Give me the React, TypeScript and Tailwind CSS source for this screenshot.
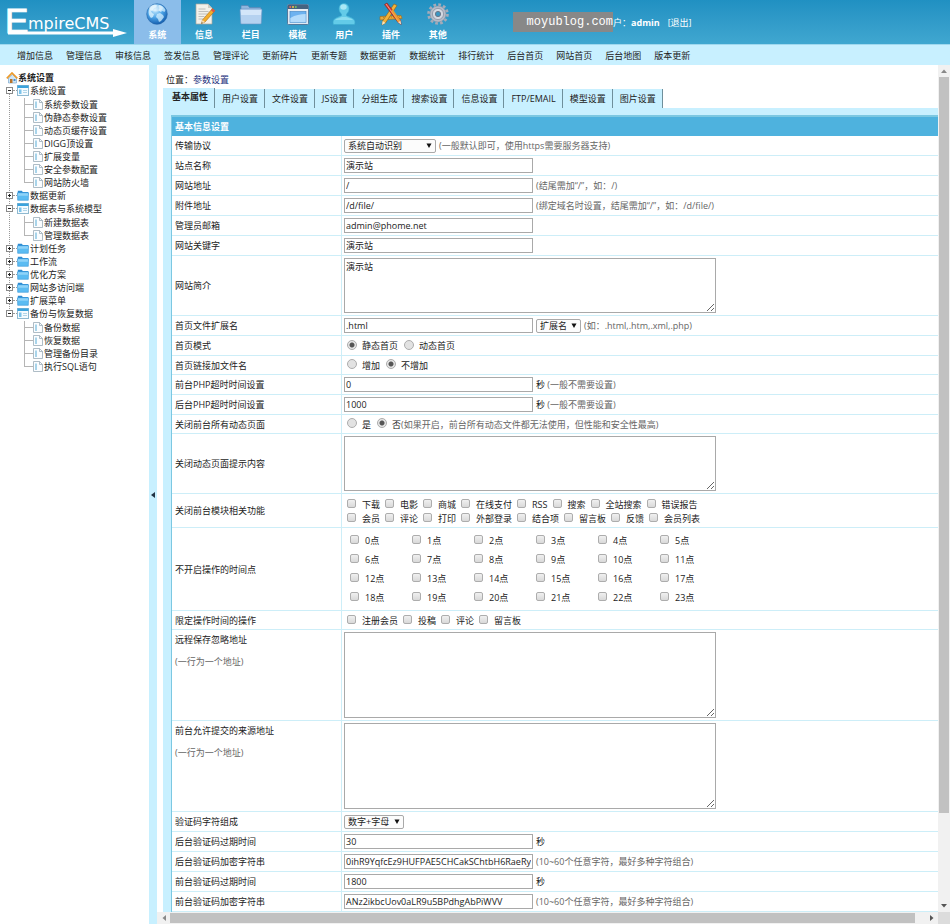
import React, { useState } from 'react';

type TreeGroup = { name: string; children?: string[] };

const menuLinks = ['增加信息', '管理信息', '审核信息', '签发信息', '管理评论', '更新碎片', '更新专题', '数据更新', '数据统计', '排行统计', '后台首页', '网站首页', '后台地图', '版本更新'];

const tabs = ['基本属性', '用户设置', '文件设置', 'JS设置', '分组生成', '搜索设置', '信息设置', 'FTP/EMAIL', '模型设置', '图片设置'];

const tree: TreeGroup[] = [
    { name: '系统设置', children: ['系统参数设置', '伪静态参数设置', '动态页缓存设置', 'DIGG顶设置', '扩展变量', '安全参数配置', '网站防火墙'] },
    { name: '数据更新' },
    { name: '数据表与系统模型', children: ['新建数据表', '管理数据表'] },
    { name: '计划任务' },
    { name: '工作流' },
    { name: '优化方案' },
    { name: '网站多访问端' },
    { name: '扩展菜单' },
    { name: '备份与恢复数据', children: ['备份数据', '恢复数据', '管理备份目录', '执行SQL语句'] },
];

const modules = [
    ['下载', '电影', '商城', '在线支付', 'RSS', '搜索', '全站搜索', '错误报告'],
    ['会员', '评论', '打印', '外部登录', '结合项', '留言板', '反馈', '会员列表'],
];

const hours = Array.from({ length: 24 }, (_, i) => `${i}点`);

/* ---------- icons ---------- */

const GlobeIcon = () => (
    <svg viewBox="0 0 24 24" className="size-6">
        <defs>
            <radialGradient id="globe" cx="0.4" cy="0.3" r="0.75">
                <stop offset="0" stopColor="#c9ecff" />
                <stop offset="0.5" stopColor="#4ba3e6" />
                <stop offset="1" stopColor="#0f56a8" />
            </radialGradient>
        </defs>
        <circle cx="12" cy="12" r="10.3" fill="url(#globe)" stroke="#2465a8" strokeWidth="0.6" />
        <path d="M4 8c1-3 3-5 6-5.500l2 1-1 2-2 .5-1 2-2 1 1 2 2 1-1 3-2 1c-2-2-3-5-2-8z" fill="#e2f5ff" opacity=".75" />
        <path d="M14 3c3 .5 5 2 6.500 5l-1 2-2-1-2 1-2-2 1-2-1-1zM12 12l3-1 3 2 1 2-3 4-2 1-1-3-2-2z" fill="#d3efff" opacity=".75" />
        <ellipse cx="11" cy="6" rx="7" ry="3.500" fill="#fff" opacity=".4" />
    </svg>
);

const NoteIcon = () => (
    <svg viewBox="0 0 24 24" className="size-6">
        <path d="M4 2h12l4 4v16H4z" fill="#f3f1ea" stroke="#a9a69c" strokeWidth="0.7" />
        <path d="M16 2v4h4z" fill="#cfccc2" />
        <path d="M6.500 7h7M6.500 9.500h10M6.500 12h9M6.500 14.500h6M6.500 17h5" stroke="#b9b9b6" strokeWidth="0.9" />
        <path d="M20.500 6.500l2.500 2.200L13 20l-3.500 1.500 1-3.600z" fill="#f4ae2b" stroke="#a76a12" strokeWidth="0.6" />
        <path d="M20.500 6.500l2.500 2.200-1.500 1.700-2.500-2.200z" fill="#d9534a" />
        <path d="M10.500 17.900l2.500 2.100-3.500 1.500z" fill="#f7dfb3" />
        <path d="M10 20.200l.8.700-1.500.7z" fill="#333" />
    </svg>
);

const FolderIcon = () => (
    <svg viewBox="0 0 24 24" className="size-6">
        <path d="M2 4.500c0-.6.400-1 1-1h6l1.500 2H21c.6 0 1 .4 1 1V10H2z" fill="#8fb6dd" stroke="#5580b0" strokeWidth="0.6" />
        <path d="M1 8c0-.6.400-1 1-1h20c.6 0 1 .4 1 1l-.7 13c0 .6-.4 1-1 1H2.700c-.6 0-1-.4-1-1z" fill="#b5d2f0" stroke="#6b93c2" strokeWidth="0.6" />
        <path d="M1.800 8h20.400l-.3 5H2.100z" fill="#d3e6f9" />
    </svg>
);

const WindowIcon = () => (
    <svg viewBox="0 0 24 24" className="size-6">
        <rect x="1.500" y="2.500" width="21" height="20" rx="1" fill="#dfe9f2" stroke="#54799c" />
        <rect x="2" y="3" width="20" height="4" fill="#46637f" />
        <circle cx="4.200" cy="5" r="1" fill="#ec6a5b" />
        <circle cx="7" cy="5" r="1" fill="#f3c447" />
        <circle cx="9.800" cy="5" r="1" fill="#79c65b" />
        <rect x="2" y="7" width="20" height="2" fill="#e9eef3" />
        <rect x="4" y="9.500" width="16" height="11" fill="#6db2f0" stroke="#3e82c4" strokeWidth="0.6" />
        <path d="M4.300 16c5-3 10-4 15.400-4v8.200H4.300z" fill="#b3dbfb" />
    </svg>
);

const UserIcon = () => (
    <svg viewBox="0 0 24 24" className="size-6">
        <path d="M12 1.500c3 0 5 2.200 5 5.200 0 2.300-1.100 4.300-2.500 5.300v1.600c1 1.200 7.500 2 8.300 5.400.3 1.500.2 2.600-.3 3.500H1.500c-.5-.9-.6-2-.3-3.500.8-3.400 7.300-4.200 8.300-5.400V12C8.100 11 7 9 7 6.700c0-3 2-5.200 5-5.200z" fill="#63cbe8" stroke="#3aabd0" strokeWidth="0.6" />
        <ellipse cx="11.500" cy="5" rx="3.200" ry="2.700" fill="#a9e8f6" />
        <path d="M3 18c2-2 5-2 7-3h4c2 1 5 1 7 3z" fill="#8bddf0" />
    </svg>
);

const PluginIcon = () => (
    <svg viewBox="0 0 24 24" className="size-6">
        <path d="M1 14.500l21 -1 1 3-22 1.500z" fill="#e9a93a" stroke="#a26a14" strokeWidth="0.6" />
        <path d="M4 15.500l17-.8" stroke="#8a5a12" strokeWidth="0.5" strokeDasharray="1 1" />
        <path d="M15 2l3 1.500L6.500 21 3 23l.6-4z" fill="#f2b33a" stroke="#8f5c11" strokeWidth="0.6" />
        <path d="M3.600 19l2.900 2L3 23z" fill="#f5e3c0" />
        <path d="M5.500 2.500L8 1l13.500 17.500.7 4-3.100-2z" fill="#d8372f" stroke="#8b1913" strokeWidth="0.5" />
        <path d="M7 2l12.800 17.800" stroke="#f9b49b" strokeWidth="0.8" />
        <path d="M12 9l2-1.500 7.500 11-2.400 2z" fill="#f2b33a" opacity=".8" />
        <path d="M21.500 18.500l.7 4-3.100-2z" fill="#f2dfc2" />
    </svg>
);

const GearIcon = () => (
    <svg viewBox="0 0 24 24" className="size-6">
        <circle cx="12" cy="12" r="9.300" fill="none" stroke="#a4abb9" strokeWidth="3" strokeDasharray="2.670 2.200" />
        <circle cx="12" cy="12" r="8" fill="#b4bbc8" stroke="#8a91a0" strokeWidth="0.5" />
        <circle cx="12" cy="12" r="5.600" fill="#d3d8e1" stroke="#8b92a2" strokeWidth="0.8" />
        <circle cx="12" cy="12" r="2.600" fill="#3a97c4" stroke="#6d7688" />
    </svg>
);

const HomeIcon = () => (
    <svg viewBox="0 0 12 12" className="size-3 shrink-0">
        <path d="M2.500 6v5h8V6L6.500 2.500z" fill="#cfe6f7" stroke="#6d9dc7" strokeWidth="0.6" />
        <path d="M0.800 6.300L6 1l5.300 5.300" fill="none" stroke="#ec9a2c" strokeWidth="1.700" />
        <rect x="4" y="7" width="2.500" height="4" fill="#b97328" />
        <rect x="7.500" y="7" width="2" height="2" fill="#4b8ed0" />
    </svg>
);

const OpenGroupIcon = () => (
    <svg viewBox="0 0 12 11" className="h-[11px] w-3 shrink-0">
        <rect x="0.500" y="0.500" width="11" height="10" fill="#f4fbff" stroke="#8fb9d0" />
        <rect x="0.500" y="0.500" width="11" height="2.500" fill="#3ba3dd" />
        <rect x="2" y="4.500" width="2.500" height="4.500" fill="#7cc3ea" />
        <path d="M6 5.500h4M6 7.500h4" stroke="#9fcbe2" strokeWidth="0.8" />
    </svg>
);

const ClosedGroupIcon = () => (
    <svg viewBox="0 0 12 11" className="h-[11px] w-3 shrink-0">
        <path d="M0.800 0.800h4l1 1.200h5.400V5H0.800z" fill="#2f8bd0" />
        <path d="M0.500 2.800h11l-.2 7.500H0.700z" fill="#5cbcf2" stroke="#3596d6" strokeWidth="0.6" />
        <path d="M1 3.300h10l-.1 2.500H1.100z" fill="#8fd3f8" />
    </svg>
);

const PageIcon = () => (
    <svg viewBox="0 0 10 11" className="h-[11px] w-[10px] shrink-0">
        <path d="M0.500 0.500h6l3 3v7h-9z" fill="#fbfdff" stroke="#9aacb8" strokeWidth="0.8" />
        <path d="M6.500 0.500v3h3" fill="none" stroke="#9aacb8" strokeWidth="0.8" />
        <rect x="2" y="2.500" width="2" height="6.500" fill="#a8d4ea" />
    </svg>
);

const ToggleBox = ({ open }: { open: boolean }) => (
    <svg viewBox="0 0 7 7" className="size-[7px] shrink-0" shapeRendering="crispEdges">
        <rect x="0.500" y="0.500" width="6" height="6" fill="#fff" stroke="#8a8a8a" />
        <path d={open ? 'M2 3.500h3' : 'M2 3.500h3M3.500 2v3'} stroke="#222" />
    </svg>
);

const Arrow = ({ d, color = '#555' }: { d: string; color?: string }) => (
    <svg viewBox="0 0 6 6" className="size-[6px] shrink-0">
        <path d={d} fill={color} />
    </svg>
);

const mainNav = [
    { name: '系统', icon: <GlobeIcon /> },
    { name: '信息', icon: <NoteIcon /> },
    { name: '栏目', icon: <FolderIcon /> },
    { name: '模板', icon: <WindowIcon /> },
    { name: '用户', icon: <UserIcon /> },
    { name: '插件', icon: <PluginIcon /> },
    { name: '其他', icon: <GearIcon /> },
];

/* ---------- form pieces ---------- */

const Row = ({ label, id, note, height = 'h-[20px]', children }: { label: string; id?: string; note?: string; height?: string; children: React.ReactNode }) => (
    <tr>
        <th scope="row" className={`${height} border-r border-b border-[#cdeef8] pl-[3px] text-left font-normal ${note ? 'pt-[3px] align-top' : 'align-middle'}`}>
            {id ? <label htmlFor={id} className="block">{label}</label> : <span className="block">{label}</span>}
            {note && <span className="mt-[9px] block text-[#666]">{note}</span>}
        </th>
        <td className="border-b border-[#cdeef8] pl-[2px] align-middle">
            <div className="flex items-center gap-[3px]">{children}</div>
        </td>
    </tr>
);

const TextBox = ({ id, value }: { id: string; value: string }) => (
    <input id={id} type="text" defaultValue={value} className="h-[15px] w-[189px] border border-[#a9a9a9] bg-white px-px outline-none" />
);

const Area = ({ id, value = '', height }: { id: string; value?: string; height: string }) => (
    <textarea id={id} defaultValue={value} className={`${height} block w-[372px] resize border border-[#a9a9a9] bg-white p-px outline-none`} />
);

const Picker = ({ id, options, width }: { id: string; options: string[]; width: string }) => (
    <span className="relative flex">
        <select id={id} aria-label={id} className={`${width} h-[14px] appearance-none rounded-xs border border-[#a9a9a9] bg-[#fcfcfc] pl-[3px] leading-[12px] outline-none`}>
            {options.map((o) => <option key={o}>{o}</option>)}
        </select>
        <span className="pointer-events-none absolute top-1 right-1">
            <Arrow d="M0.500 0.500h5L3 5z" color="#111" />
        </span>
    </span>
);

const Hint = ({ children }: { children: React.ReactNode }) => <span className="text-[#666]">{children}</span>;

const Check = ({ name }: { name: string }) => (
    <label className="flex items-center gap-[6px]">
        <input type="checkbox" className="size-[9px] -translate-y-px appearance-none rounded-xs border border-[#adadad] bg-linear-to-b from-[#f0f0f0] to-[#d9d9d9] checked:bg-[#777]" />
        <span>{name}</span>
    </label>
);

const Radio = ({ name, text, checked = false }: { name: string; text: React.ReactNode; checked?: boolean }) => (
    <label className="flex items-center gap-[5px]">
        <input
            type="radio"
            name={name}
            defaultChecked={checked}
            className="size-[10px] -translate-y-px appearance-none rounded-full border border-[#adadad] bg-[#e2e2e2] checked:bg-[radial-gradient(circle,#555_0_2px,#e6e6e6_3px)]"
        />
        <span>{text}</span>
    </label>
);

const Header = () => (
    <header>
        <div className="flex h-[44px] bg-linear-to-b from-[#2090c2] to-[#40a7d0] text-white">
            <a href="#home" aria-label="EmpireCMS" className="w-[134px] shrink-0">
                <svg viewBox="0 0 134 44" className="h-[44px] w-[134px]" fill="#fff">
                    <text x="5" y="33" fontFamily="Liberation Sans" fontSize="35" stroke="#fff" strokeWidth="1">E</text>
                    <text x="28" y="29" fontFamily="DejaVu Sans" fontSize="16">mpireCMS</text>
                    <path d="M8 31.500h105V29l14 4-14 4v-2.500H8z" />
                </svg>
            </a>
            <nav className="flex w-[327px] shrink-0">
                {mainNav.map((item, i) => (
                    <a key={item.name} href="#nav" className={`flex flex-1 flex-col items-center gap-[2px] pt-[2px] font-bold ${i === 0 ? 'bg-[#8bbdea]' : ''}`}>
                        {item.icon}
                        <span>{item.name}</span>
                    </a>
                ))}
            </nav>
            <div className="ml-[52px] flex items-center whitespace-nowrap">
                <span className="flex h-[20px] w-[100px] items-center justify-end bg-[#888] font-['Liberation_Mono',monospace] text-[12px]">moyublog.com</span>
                <span>户：</span>
                <b>admin</b>
                <a href="#logout" className="ml-2">[退出]</a>
            </div>
        </div>
        <nav className="flex h-[21px] items-center gap-[13px] border-t border-[#9fd8ee] bg-[#c8f0ff] pl-[17px] whitespace-nowrap">
            {menuLinks.map((m) => <a key={m} href="#menu">{m}</a>)}
        </nav>
    </header>
);

const Sidebar = () => (
    <aside className="w-[149px] shrink-0 pt-[6px] pl-[6px] whitespace-nowrap">
        <a href="#root" className="flex h-[13px] items-center font-bold"><HomeIcon />系统设置</a>
        <ul>
            {tree.map((group, i) => (
                <li key={group.name} className="relative">
                    {i < tree.length - 1 && <span className="absolute top-[6px] -bottom-[6px] left-[3px] border-l border-dotted border-[#999]" />}
                    <button type="button" className="relative flex h-[13px] items-center">
                        <ToggleBox open={!!group.children} />
                        <span className="w-1 border-t border-dotted border-[#999]" />
                        {group.children ? <OpenGroupIcon /> : <ClosedGroupIcon />}
                        <span className="ml-px">{group.name}</span>
                    </button>
                    {group.children && (
                        <ul className="mt-px ml-[18px]">
                            {group.children.map((child, k) => (
                                <li key={child} className="flex h-[13px] items-center">
                                    <span className={`self-start border-l border-[#b5b5b5] ${k === group.children!.length - 1 ? 'h-[7px]' : 'h-[13px]'}`} />
                                    <span className="w-[8px] border-t border-[#b5b5b5]" />
                                    <PageIcon />
                                    <a href="#item" className="ml-px">{child}</a>
                                </li>
                            ))}
                        </ul>
                    )}
                </li>
            ))}
        </ul>
    </aside>
);

const SettingsTable = () => (
    <table className="w-full table-fixed border-separate border-spacing-0 border-t-2 border-l border-[#7cc8e2] bg-white">
        <colgroup>
            <col className="w-[170px]" />
            <col />
        </colgroup>
        <thead>
            <tr>
                <th colSpan={2} className="h-[19px] bg-[#4eb2de] pl-[3px] text-left font-bold text-white">基本信息设置</th>
            </tr>
        </thead>
        <tbody>
            <Row label="传输协议" id="protocol">
                <Picker id="protocol" options={['系统自动识别', 'http', 'https']} width="w-[92px]" />
                <Hint>(一般默认即可，使用https需要服务器支持)</Hint>
            </Row>
            <Row label="站点名称" id="sitename"><TextBox id="sitename" value="演示站" /></Row>
            <Row label="网站地址" id="newsurl">
                <TextBox id="newsurl" value="/" />
                <Hint>(结尾需加“/”，如：/)</Hint>
            </Row>
            <Row label="附件地址" id="fileurl">
                <TextBox id="fileurl" value="/d/file/" />
                <Hint>(绑定域名时设置，结尾需加“/”，如：/d/file/)</Hint>
            </Row>
            <Row label="管理员邮箱" id="email"><TextBox id="email" value="admin@phome.net" /></Row>
            <Row label="网站关键字" id="sitekey"><TextBox id="sitekey" value="演示站" /></Row>
            <Row label="网站简介" id="siteintro" height="h-[60px]"><Area id="siteintro" value="演示站" height="h-[55px]" /></Row>
            <Row label="首页文件扩展名" id="indextype">
                <TextBox id="indextype" value=".html" />
                <Picker id="exts" options={['扩展名', '.html', '.htm', '.xml', '.php']} width="w-[45px]" />
                <Hint>(如：.html,.htm,.xml,.php)</Hint>
            </Row>
            <Row label="首页模式">
                <div className="flex gap-[6px] pl-[3px]">
                    <Radio name="indexmode" text="静态首页" checked />
                    <Radio name="indexmode" text="动态首页" />
                </div>
            </Row>
            <Row label="首页链接加文件名" height="h-[19px]">
                <div className="flex gap-[6px] pl-[3px]">
                    <Radio name="indexlink" text="增加" />
                    <Radio name="indexlink" text="不增加" checked />
                </div>
            </Row>
            <Row label="前台PHP超时时间设置" id="fronttime">
                <TextBox id="fronttime" value="0" />
                <span>秒 <Hint>(一般不需要设置)</Hint></span>
            </Row>
            <Row label="后台PHP超时时间设置" id="backtime">
                <TextBox id="backtime" value="1000" />
                <span>秒 <Hint>(一般不需要设置)</Hint></span>
            </Row>
            <Row label="关闭前台所有动态页面" height="h-[19px]">
                <div className="flex gap-[6px] pl-[3px]">
                    <Radio name="closequery" text="是" />
                    <Radio name="closequery" text={<>否<Hint>(如果开启，前台所有动态文件都无法使用，但性能和安全性最高)</Hint></>} checked />
                </div>
            </Row>
            <Row label="关闭动态页面提示内容" id="closemsg" height="h-[60px]"><Area id="closemsg" height="h-[55px]" /></Row>
            <Row label="关闭前台模块相关功能" height="h-[34px]">
                <div className="flex flex-col gap-px pt-px pl-[3px]">
                    {modules.map((line) => (
                        <div key={line[0]} className="flex gap-[5px]">
                            {line.map((m) => <Check key={m} name={m} />)}
                        </div>
                    ))}
                </div>
            </Row>
            <Row label="不开启操作的时间点" height="h-[83px]">
                <div className="grid grid-cols-[repeat(6,62px)] gap-y-[6px] pl-[6px]">
                    {hours.map((h) => <Check key={h} name={h} />)}
                </div>
            </Row>
            <Row label="限定操作时间的操作" height="h-[19px]">
                <div className="flex gap-[5px] pl-[3px]">
                    {['注册会员', '投稿', '评论', '留言板'].map((m) => <Check key={m} name={m} />)}
                </div>
            </Row>
            <Row label="远程保存忽略地址" id="notsave" note="(一行为一个地址)" height="h-[91px]"><Area id="notsave" height="h-[86px]" /></Row>
            <Row label="前台允许提交的来源地址" id="fromurl" note="(一行为一个地址)" height="h-[91px]"><Area id="fromurl" height="h-[86px]" /></Row>
            <Row label="验证码字符组成" id="keytype">
                <Picker id="keytype" options={['数字+字母', '数字', '字母']} width="w-[60px]" />
            </Row>
            <Row label="后台验证码过期时间" id="backkeytime">
                <TextBox id="backkeytime" value="30" />
                <span>秒</span>
            </Row>
            <Row label="后台验证码加密字符串" id="backkey">
                <TextBox id="backkey" value="0ihR9YqfcEz9HUFPAE5CHCakSChtbH6RaeRy" />
                <Hint>(10~60个任意字符，最好多种字符组合)</Hint>
            </Row>
            <Row label="前台验证码过期时间" id="frontkeytime">
                <TextBox id="frontkeytime" value="1800" />
                <span>秒</span>
            </Row>
            <Row label="前台验证码加密字符串" id="frontkey">
                <TextBox id="frontkey" value="ANz2ikbcUov0aLR9u5BPdhgAbPiWVV" />
                <Hint>(10~60个任意字符，最好多种字符组合)</Hint>
            </Row>
        </tbody>
    </table>
);

const App: React.FC = () => {
    const [tab, setTab] = useState<number>(0);

    return (
        <div className="flex min-h-screen flex-col bg-white font-['Open_Sans','Noto_Sans_CJK_SC',sans-serif] text-[9px] leading-[13px] text-[#222]">
            <Header />
            <div className="flex flex-1">
                <Sidebar />
                <div className="flex w-[8px] shrink-0 items-center justify-center bg-[#c8f0ff]">
                    <Arrow d="M5 0v6L1 3z" color="#234" />
                </div>
                <div className="flex min-w-0 flex-1 flex-col">
                    <div className="flex flex-1">
                        <main className="flex min-w-0 flex-1 flex-col pl-[6px]">
                            <p className="mt-[8px] pl-[3px]">位置：<a href="#location" className="text-[#1d2f7c]">参数设置</a></p>
                            <div role="tablist" className="mt-[2px] flex items-end border-l-2 border-[#c8f0ff]">
                                {tabs.map((t, i) => (
                                    <button
                                        key={t}
                                        type="button"
                                        role="tab"
                                        aria-selected={tab === i}
                                        onClick={() => setTab(i)}
                                        className={`border-r border-[#6f8f9b] bg-[#c8f0ff] pr-[6px] pl-[7px] whitespace-nowrap ${tab === i ? 'h-[20px] pb-1 font-bold' : 'h-[19px] pb-px'}`}
                                    >
                                        {t}
                                    </button>
                                ))}
                            </div>
                            <div className="flex-1 bg-[#c8f0ff] pt-[7px] pl-[8px]">
                                <SettingsTable />
                            </div>
                        </main>
                        <div className="flex w-[12px] shrink-0 flex-col items-center bg-[#f1f1f1]">
                            <span className="flex h-[12px] items-center"><Arrow d="M0 5h6L3 1.500z" color="#888" /></span>
                            <span className="w-[10px] flex-[735] bg-[#c1c1c1]" />
                            <span className="flex-[87]" />
                            <span className="flex h-[12px] items-center"><Arrow d="M0 1h6L3 4.500z" /></span>
                        </div>
                    </div>
                    <div className="flex h-[12px] bg-[#f1f1f1]">
                        <span className="flex w-[13px] items-center justify-center"><Arrow d="M5 0v6L1.500 3z" color="#888" /></span>
                        <span className="my-px flex-[745] bg-[#c1c1c1]" />
                        <span className="flex-[11]" />
                        <span className="flex w-[12px] items-center justify-center"><Arrow d="M1 0v6L4.500 3z" /></span>
                        <span className="w-[12px] bg-[#dcdcdc]" />
                    </div>
                </div>
            </div>
        </div>
    );
};

export default App;
